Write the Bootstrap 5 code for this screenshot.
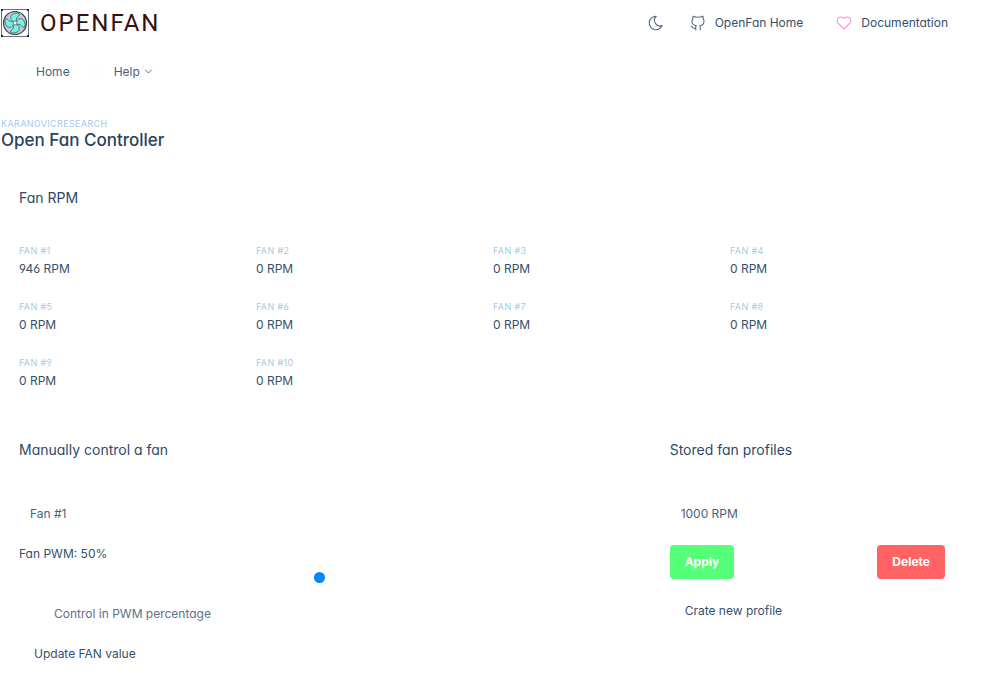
<!DOCTYPE html>
<html lang="en">
<head>
<meta charset="utf-8">
<meta name="viewport" content="width=device-width, initial-scale=1">
<title>OpenFan</title>
<link href="https://cdn.jsdelivr.net/npm/bootstrap@5.3.0/dist/css/bootstrap.min.css" rel="stylesheet">
<style>
body{font-family:Inter,"Liberation Sans",sans-serif;font-feature-settings:"cv03","cv04","cv11";font-size:12px;line-height:20px;color:#34506c;background:#fff}
.page-wrap{padding:0 36px 0 0}
a{color:inherit;text-decoration:none}
.icon{width:18px;height:18px;fill:none;stroke:currentColor;stroke-width:1.5;stroke-linecap:round;stroke-linejoin:round;flex:none;color:#5a6c88}
.topbar{height:45px;padding-right:16px}
.brand-link{gap:10px}
.brand-name{font-family:Roboto,sans-serif;font-size:24px;line-height:28px;font-weight:400;letter-spacing:2px;color:#35100f}
.icon-btn{border:0;background:none;padding:0;line-height:0}
.icon.heart{color:#ff8fd6}
.menu{height:53px;gap:10px;padding-left:10px;color:#4b6179}
.menu .icon{color:#f5fdfe}
.menu .caret{width:9px;height:9px;color:#4b6179;stroke-width:2.5}
.eyebrow{font-size:9px;line-height:12px;text-transform:uppercase;letter-spacing:.04em;color:#a9c8e6}
.page-head{padding:20px 0 38px 1px}
h1{font-size:17px;line-height:20px;font-weight:500;margin:0;color:#29425f}
.panel{padding:0 19px}
h2{font-size:14px;line-height:20px;font-weight:400;margin:0;color:#2f4a66}
.rpm-grid{--bs-gutter-x:22px;row-gap:20px;padding-top:35px}
.stat-label{line-height:16px}
.form-select,.form-select:focus{font-size:12px;line-height:20px;padding:7px 10px;border-color:#fff;color:#4b6179;background-image:none;box-shadow:none;height:36px;margin:36px 0 12px}
.form-range{height:20px;display:block;margin:4px 0 16px}
.form-range::-webkit-slider-runnable-track{background:#fff;height:4px}
.form-range::-webkit-slider-thumb{width:11px;height:11px;margin-top:-4px;background:#0088ff}
.form-range::-moz-range-track{background:#fff}
.form-range::-moz-range-thumb{width:11px;height:11px;background:#0088ff}
.switch-row{padding-left:35px;min-height:20px;margin:0 0 13px;color:#5b7089}
.switch-row .form-check-input{margin-left:-35px;width:25px;border-color:#fff;background-color:#fff;background-image:none}
.btn{font-size:12px;line-height:20px;padding:6px 14px;border-radius:4px;color:#34506c}
.btn-apply,.btn-delete{font-weight:700;color:#fff}
.btn-apply,.btn-apply:hover{background:#55ff77;color:#fff}
.btn-delete,.btn-delete:hover{background:#ff6363;color:#fff}
.profile-actions{padding:1px 0 15px}
.control-row{--bs-gutter-x:12px;padding-top:49px}
</style>
</head>
<body>
<div class="container-fluid page-wrap">
  <header class="topbar d-flex align-items-center justify-content-between">
    <a href="#" class="brand-link d-flex align-items-center">
      <svg width="30" height="30" viewBox="0 0 30 30" aria-hidden="true">
        <rect x="1.5" y="1.5" width="27" height="27" fill="#fff" stroke="#6b7075" stroke-width="1"/>
        <circle cx="15" cy="15" r="11.500" fill="#c3ccd6" stroke="#3b4148" stroke-width="1.2"/>
        <g fill="#72f4e8" stroke="#28484d" stroke-width=".7">
          <path id="blade" d="M14 13.500C10.500 12.500 9.800 9 11.800 6.800C14 4.600 18 4.500 19.300 5.800C20 7.500 17.500 8 16.800 9.800C16.300 11.200 16.500 12.500 15.800 13.500Z"/>
          <use href="#blade" transform="rotate(90 15 15)"/>
          <use href="#blade" transform="rotate(180 15 15)"/>
          <use href="#blade" transform="rotate(270 15 15)"/>
        </g>
        <circle cx="15" cy="15" r="1.800" fill="#fff" stroke="#6b7075" stroke-width=".5"/>
        <path d="M1 1h2v2H1zM27 1h2v2h-2zM1 27h2v2H1zM27 27h2v2h-2z" fill="#22262a"/>
      </svg>
      <span class="brand-name">OPENFAN</span>
    </a>
    <div class="d-flex align-items-center">
      <button type="button" class="icon-btn me-4" aria-label="Enable dark mode"><svg class="icon" viewBox="0 0 24 24"><path d="M12 3c.132 0 .263 0 .393 0a7.500 7.500 0 0 0 7.920 12.446a9 9 0 1 1 -8.313 -12.454z"/></svg></button>
      <a href="#" class="d-flex align-items-center gap-2 me-4"><svg class="icon" viewBox="0 0 24 24"><path d="M9 19c-4.300 1.400 -4.300 -2.500 -6 -3m12 5v-3.500c0 -1 .1 -1.400 -.5 -2c2.800 -.3 5.500 -1.400 5.500 -6a4.600 4.600 0 0 0 -1.300 -3.200a4.200 4.200 0 0 0 -.1 -3.200s-1.100 -.3 -3.500 1.300a12.300 12.300 0 0 0 -6.200 0c-2.400 -1.600 -3.500 -1.300 -3.500 -1.300a4.200 4.200 0 0 0 -.1 3.200a4.600 4.600 0 0 0 -1.300 3.200c0 4.600 2.700 5.700 5.500 6c-.6 .6 -.6 1.200 -.5 2v3.500"/></svg>OpenFan Home</a>
      <a href="#" class="d-flex align-items-center gap-2 ms-2"><svg class="icon heart" viewBox="0 0 24 24"><path d="M19.500 12.572l-7.500 7.428l-7.500 -7.428a5 5 0 1 1 7.500 -6.566a5 5 0 1 1 7.500 6.572"/></svg>Documentation</a>
    </div>
  </header>
  <nav class="menu d-flex align-items-center">
    <a href="#" class="d-flex align-items-center gap-2"><svg class="icon" viewBox="0 0 24 24"><path d="M5 12H3l9-9 9 9h-2M5 12v7a2 2 0 0 0 2 2h10a2 2 0 0 0 2-2v-7M9 21v-6a2 2 0 0 1 2-2h2a2 2 0 0 1 2 2v6"/></svg>Home</a>
    <a href="#" class="d-flex align-items-center"><svg class="icon mx-2" viewBox="0 0 24 24"><circle cx="12" cy="12" r="4"/><circle cx="12" cy="12" r="9"/><path d="M15 15l3.300 3.300M9 15l-3.300 3.300M5.700 5.700L9 9M18.300 5.700L15 9"/></svg>Help<svg class="icon caret ms-1" viewBox="0 0 24 24"><path d="M4 8l8 8 8-8"/></svg></a>
  </nav>
  <main>
    <div class="page-head">
      <div class="eyebrow">KaranovicResearch</div>
      <h1>Open Fan Controller</h1>
    </div>
    <section class="panel">
      <h2>Fan RPM</h2>
      <div class="row row-cols-4 rpm-grid">
        <div><div class="eyebrow stat-label">Fan #1</div><div>946 RPM</div></div>
        <div><div class="eyebrow stat-label">Fan #2</div><div>0 RPM</div></div>
        <div><div class="eyebrow stat-label">Fan #3</div><div>0 RPM</div></div>
        <div><div class="eyebrow stat-label">Fan #4</div><div>0 RPM</div></div>
        <div><div class="eyebrow stat-label">Fan #5</div><div>0 RPM</div></div>
        <div><div class="eyebrow stat-label">Fan #6</div><div>0 RPM</div></div>
        <div><div class="eyebrow stat-label">Fan #7</div><div>0 RPM</div></div>
        <div><div class="eyebrow stat-label">Fan #8</div><div>0 RPM</div></div>
        <div><div class="eyebrow stat-label">Fan #9</div><div>0 RPM</div></div>
        <div><div class="eyebrow stat-label">Fan #10</div><div>0 RPM</div></div>
      </div>
    </section>
    <div class="row control-row">
      <section class="col-8">
        <div class="panel">
          <h2>Manually control a fan</h2>
          <select class="form-select" id="fan" aria-label="Fan"><option>Fan #1</option></select>
          <label for="pwm" class="d-block">Fan PWM: 50%</label>
          <input type="range" class="form-range" id="pwm" min="0" max="100" value="50">
          <div class="form-check form-switch switch-row"><input class="form-check-input" type="checkbox" id="mode"><label for="mode">Control in PWM percentage</label></div>
          <button type="button" class="btn">Update FAN value</button>
        </div>
      </section>
      <section class="col-4">
        <div class="panel">
          <h2>Stored fan profiles</h2>
          <select class="form-select" id="profile" aria-label="Profile"><option>1000 RPM</option></select>
          <div class="profile-actions d-flex justify-content-between"><button type="button" class="btn btn-apply">Apply</button><button type="button" class="btn btn-delete">Delete</button></div>
          <button type="button" class="btn">Crate new profile</button>
        </div>
      </section>
    </div>
  </main>
</div>
<script src="https://cdn.jsdelivr.net/npm/bootstrap@5.3.0/dist/js/bootstrap.bundle.min.js"></script>
</body>
</html>
